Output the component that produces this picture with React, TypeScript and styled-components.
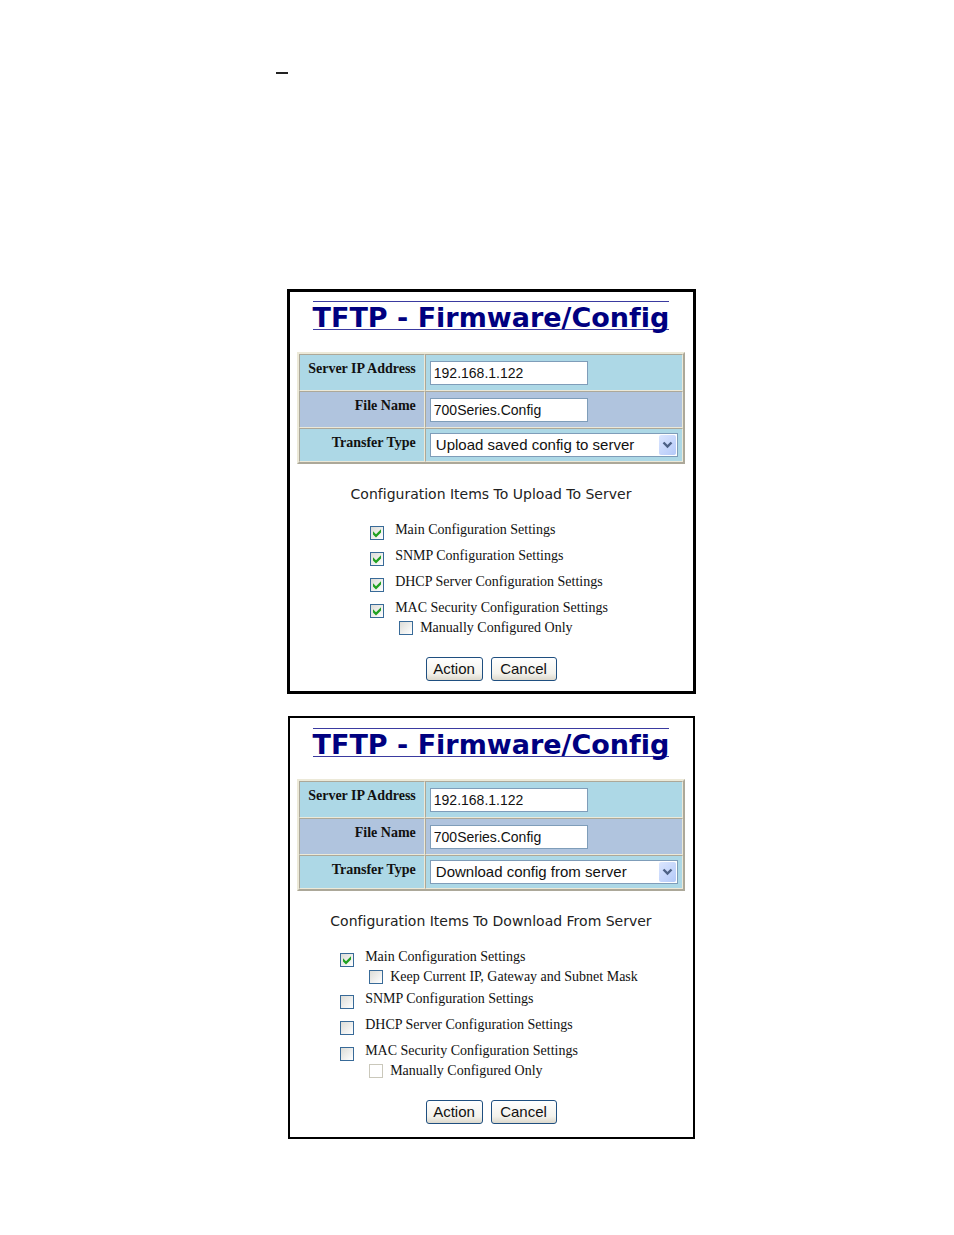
import React, { useId, useState } from "react";
import styled, { createGlobalStyle } from "styled-components";

const serif = '"Liberation Serif", "Times New Roman", serif';
const sans = '"Liberation Sans", Arial, sans-serif';
const wide = '"DejaVu Sans", Verdana, sans-serif';

const GlobalStyle = createGlobalStyle`
  *, *::before, *::after { box-sizing: border-box; }
  body {
    margin: 0;
    background: #fff;
    color: #111;
    font: 14px/20px ${serif};
    font-variant-ligatures: none;
  }
`;

const Page = styled.main`
  display: flex;
  flex-direction: column;
  align-items: center;
  padding: 72px 0 96px 28px;
`;

const Rule = styled.hr`
  width: 12px;
  height: 2px;
  margin: 0 418px 215px 0;
  border: 0;
  background: #222;
`;

const Panel = styled.form<{ $line: number; $head: number; $foot: number }>`
  box-sizing: content-box;
  width: 403px;
  max-width: calc(100% - 16px);
  display: flex;
  flex-direction: column;
  align-items: center;
  padding: ${(p) => p.$head}px 0 ${(p) => p.$foot}px;
  border: ${(p) => p.$line}px solid #000;

  & + & { margin-top: 22px; }
`;

const Title = styled.h1`
  margin: 0 0 22px;
  padding-top: 4px;
  border: solid #3a3aa0;
  border-width: 1px 0;
  color: #000080;
  font: bold 27px/23px ${wide};
  font-variant-ligatures: none;
  white-space: nowrap;
`;

const Settings = styled.table`
  width: calc(100% - 16px);
  border: 2px solid;
  border-color: #ece9d8 #aca899 #aca899 #ece9d8;
  border-spacing: 0;
`;

const Row = styled.tr<{ $alt?: boolean }>`
  background: ${(p) => (p.$alt ? "#b0c4de" : "#add8e6")};
`;

const cell = `
  border: 1px solid;
  border-color: #aca899 #ece9d8 #ece9d8 #aca899;
  vertical-align: top;
`;

const LabelCell = styled.th`
  ${cell}
  width: 126px;
  padding: 4px 8px;
  text-align: right;
  font: bold 14px/20px ${serif};
  white-space: nowrap;
`;

const FieldCell = styled.td<{ $tight?: boolean }>`
  ${cell}
  padding: ${(p) => (p.$tight ? "4px" : "6px 4px 5px")};
`;

const TextBox = styled.input`
  display: block;
  width: 158px;
  height: 24px;
  padding: 0 3px;
  border: 1px solid #7f9db9;
  border-radius: 0;
  background: #fff;
  color: #111;
  font: 14px/20px ${sans};
`;

const SelectWrap = styled.div`
  position: relative;
  width: 248px;
  height: 24px;
`;

const Select = styled.select`
  appearance: none;
  display: block;
  width: 100%;
  height: 100%;
  padding: 0 20px 0 5px;
  border: 1px solid #7f9db9;
  border-radius: 0;
  background: #fff;
  color: #111;
  font: 15px/20px ${sans};
`;

const Arrow = styled.span`
  position: absolute;
  top: 2px;
  right: 2px;
  bottom: 2px;
  width: 17px;
  display: grid;
  place-items: center;
  border-radius: 2px;
  background: linear-gradient(135deg, #dbe6ff, #b4c9f8);
  pointer-events: none;
`;

const Caption = styled.h2`
  margin: 20px 0 16px;
  color: #222;
  font: 14px/20px ${wide};
  font-variant-ligatures: none;
  white-space: nowrap;
`;

const List = styled.ul`
  display: flex;
  flex-direction: column;
  gap: 6px;
  margin: 0 0 23px;
  padding: 0 4px 0 0;
  list-style: none;
`;

const Option = styled.label<{ $sub?: boolean }>`
  display: flex;
  align-items: ${(p) => (p.$sub ? "center" : "flex-end")};
  gap: ${(p) => (p.$sub ? 7 : 11)}px;
  margin: ${(p) => (p.$sub ? "0 0 -4px 29px" : "0")};
  white-space: nowrap;
`;

const Box = styled.span`
  display: grid;
  width: 14px;
  height: 14px;

  > * { grid-area: 1 / 1; }
`;

const Tick = styled.input`
  appearance: none;
  width: 14px;
  height: 14px;
  margin: 0;
  border: 1px solid #386a98;
  background: linear-gradient(135deg, #dcdcd7, #fff);

  &:disabled { border-color: #cac8bb; background: #fff; }
  & + svg { visibility: hidden; pointer-events: none; }
  &:checked + svg { visibility: visible; }
`;

const Buttons = styled.div`
  display: flex;
  gap: 8px;
`;

const Button = styled.button<{ $wide?: boolean }>`
  width: ${(p) => (p.$wide ? 66 : 57)}px;
  height: 24px;
  padding: 0;
  border: 1px solid #1f4f80;
  border-radius: 3px;
  background: linear-gradient(#fff, #f3f2ec 70%, #dcd8cc);
  color: #111;
  font: 15px/20px ${sans};
`;

type Item = { label: string; checked?: boolean; disabled?: boolean; sub?: Item };

function Check({ item, sub }: { item: Item; sub?: boolean }) {
  return (
    <Option $sub={sub}>
      <Box>
        <Tick type="checkbox" defaultChecked={item.checked} disabled={item.disabled} />
        <svg width="14" height="14" viewBox="0 0 14 14" aria-hidden="true">
          <path d="M3 5.2v3.3l3 3 5-5V3.2l-5 5z" fill="#21a121" />
        </svg>
      </Box>
      {item.label}
    </Option>
  );
}

type TransferProps = {
  transfer: string;
  caption: string;
  items: Item[];
  line: number;
  head: number;
  foot: number;
};

const transfers = ["Upload saved config to server", "Download config from server"];

function TransferPanel({ transfer, caption, items, line, head, foot }: TransferProps) {
  const id = useId();
  const [type, setType] = useState(transfer);
  return (
    <Panel $line={line} $head={head} $foot={foot} onSubmit={(e) => e.preventDefault()}>
      <Title>TFTP - Firmware/Config</Title>
      <Settings>
        <tbody>
          <Row>
            <LabelCell scope="row"><label htmlFor={id + "ip"}>Server IP Address</label></LabelCell>
            <FieldCell><TextBox id={id + "ip"} defaultValue="192.168.1.122" /></FieldCell>
          </Row>
          <Row $alt>
            <LabelCell scope="row"><label htmlFor={id + "file"}>File Name</label></LabelCell>
            <FieldCell><TextBox id={id + "file"} defaultValue="700Series.Config" /></FieldCell>
          </Row>
          <Row>
            <LabelCell scope="row"><label htmlFor={id + "type"}>Transfer Type</label></LabelCell>
            <FieldCell $tight>
              <SelectWrap>
                <Select id={id + "type"} value={type} onChange={(e) => setType(e.target.value)}>
                  {transfers.map((t) => <option key={t}>{t}</option>)}
                </Select>
                <Arrow>
                  <svg width="11" height="8" viewBox="0 0 11 8" aria-hidden="true">
                    <path d="M1.5 1.5l4 4 4-4" fill="none" stroke="#4d6185" strokeWidth="2.4" />
                  </svg>
                </Arrow>
              </SelectWrap>
            </FieldCell>
          </Row>
        </tbody>
      </Settings>
      <Caption>{caption}</Caption>
      <List>
        {items.map((item) => (
          <li key={item.label}>
            <Check item={item} />
            {item.sub && <Check item={item.sub} sub />}
          </li>
        ))}
      </List>
      <Buttons>
        <Button type="submit">Action</Button>
        <Button type="reset" $wide>Cancel</Button>
      </Buttons>
    </Panel>
  );
}

const uploadItems: Item[] = [
  { label: "Main Configuration Settings", checked: true },
  { label: "SNMP Configuration Settings", checked: true },
  { label: "DHCP Server Configuration Settings", checked: true },
  {
    label: "MAC Security Configuration Settings",
    checked: true,
    sub: { label: "Manually Configured Only" },
  },
];

const downloadItems: Item[] = [
  {
    label: "Main Configuration Settings",
    checked: true,
    sub: { label: "Keep Current IP, Gateway and Subnet Mask" },
  },
  { label: "SNMP Configuration Settings" },
  { label: "DHCP Server Configuration Settings" },
  {
    label: "MAC Security Configuration Settings",
    sub: { label: "Manually Configured Only", disabled: true },
  },
];

export default function App() {
  return (
    <>
      <GlobalStyle />
      <Page>
        <Rule />
        <TransferPanel
          transfer={transfers[0]}
          caption="Configuration Items To Upload To Server"
          items={uploadItems}
          line={3}
          head={9}
          foot={10}
        />
        <TransferPanel
          transfer={transfers[1]}
          caption="Configuration Items To Download From Server"
          items={downloadItems}
          line={2}
          head={10}
          foot={13}
        />
      </Page>
    </>
  );
}
